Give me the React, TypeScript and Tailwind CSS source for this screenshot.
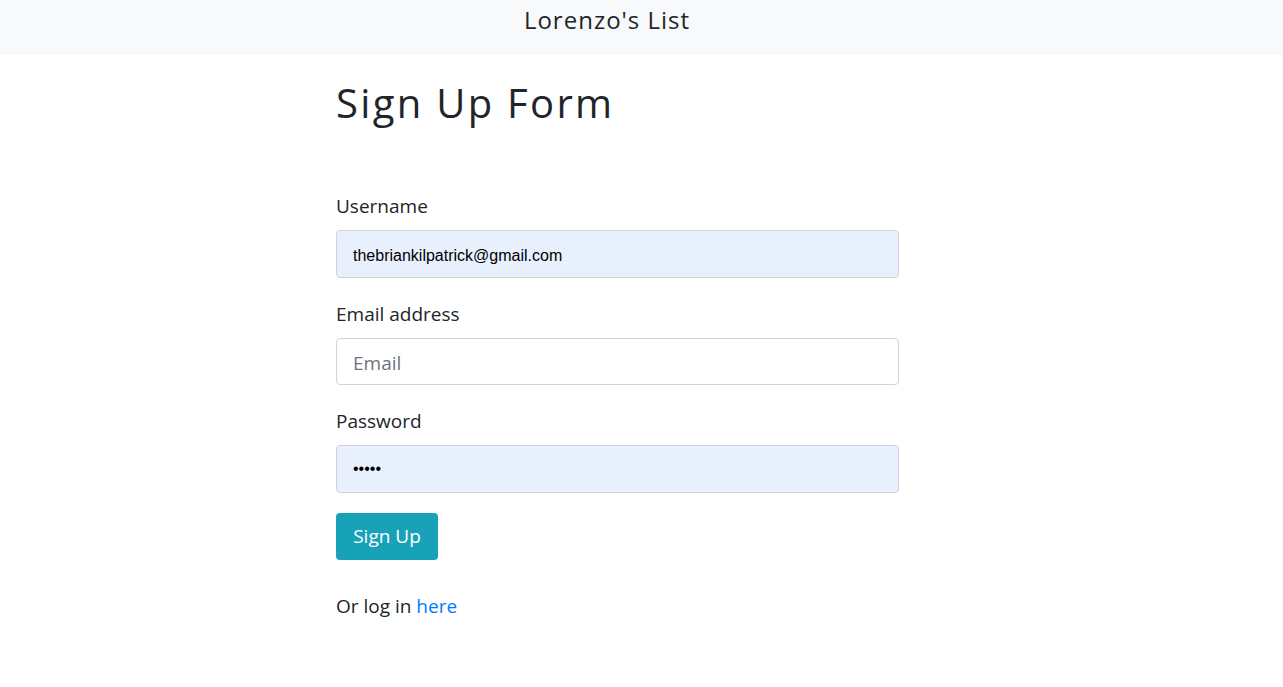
export default function App() {
  const sans = { fontFamily: '"Open Sans", "Noto Sans", sans-serif' };
  return (
    <div className="min-h-screen bg-white text-[#212529]" style={sans}>
      {/* 顶部导航 */}
      <nav className="h-[55px] bg-[#f8f9fa] flex items-center">
        <div className="w-[1214px] text-center text-[24px] leading-[36px] pb-[16px] tracking-[1px]">
          Lorenzo's List
        </div>
      </nav>

      <div className="ml-[336px] w-[563px]">
        <h1 className="mt-[22px] text-[40px] leading-[52px] font-normal tracking-[2.3px]">Sign Up Form</h1>

        <form className="mt-[62px]">
          <div className="mb-[21px]">
            <label className="block text-[19px] leading-[30px] mb-[9px]">Username</label>
            <input
              type="text"
              defaultValue="thebriankilpatrick@gmail.com"
              className="w-full h-[48px] px-4 pt-[4px] rounded-[4px] border border-[#ced4da] bg-[#e8f0fe] text-[16px] text-black outline-none"
              style={{ fontFamily: '"Liberation Sans", Arial, sans-serif' }}
            />
          </div>
          <div className="mb-[21px]">
            <label className="block text-[19px] leading-[30px] mb-[9px]">Email address</label>
            <input
              type="email"
              placeholder="Email"
              className="w-full h-[47px] px-4 pt-[2px] rounded-[4px] border border-[#ced4da] bg-white text-[19px] placeholder:text-[#6c757d] outline-none"
            />
          </div>
          <div className="mb-[20px]">
            <label className="block text-[19px] leading-[30px] mb-[9px]">Password</label>
            <input
              type="password"
              defaultValue="abcde"
              className="w-full h-[48px] px-4 rounded-[4px] border border-[#ced4da] bg-[#e8f0fe] text-[16px] text-black outline-none"
              style={{ fontFamily: '"Liberation Sans", Arial, sans-serif' }}
            />
          </div>
          <button
            type="button"
            className="h-[47px] w-[102px] rounded-[4px] bg-[#17a2b8] text-white text-[19px]"
          >
            Sign Up
          </button>
        </form>

        <p className="mt-[31px] text-[19px] leading-[30px]">
          Or log in <a href="#" className="text-[#007bff]">here</a>
        </p>
      </div>
    </div>
  );
}
